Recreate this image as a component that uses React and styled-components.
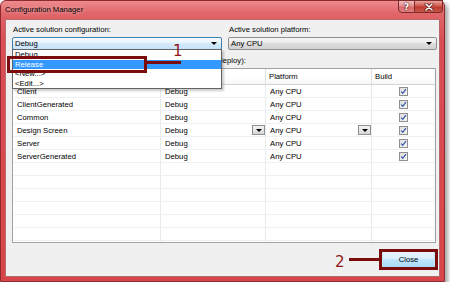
import styled, { createGlobalStyle } from "styled-components";

const GlobalStyle = createGlobalStyle`
  html, body {
    margin: 0;
    padding: 0;
    background: #ffffff;
  }
  body {
    font-family: "Liberation Sans", Arial, sans-serif;
    font-size: 7.7px;
    color: #000000;
  }
`;

const Window = styled.div`
  position: relative;
  box-sizing: border-box;
  width: 445px;
  height: 282px;
  display: flex;
  flex-direction: column;
  padding: 0 4px 4px 4px;
  border: 1px solid #8e2b2e;
  border-radius: 6px 6px 0 0;
  background: linear-gradient(180deg, #ee8b8d 0px, #e0666a 12px, #da4e53 40px, #d7454a 100%);
  box-shadow: 3px 3px 4px rgba(0, 0, 0, 0.35);
`;

const TitleBar = styled.div`
  height: 18px;
  display: flex;
  align-items: flex-start;
`;

const Title = styled.div`
  padding-top: 4px;
  line-height: 10px;
  color: #000000;
  text-shadow: 0 0 4px rgba(255, 255, 255, 0.7);
`;

const CaptionButtons = styled.div`
  display: flex;
  margin: -1px -3px 0 auto;
`;

const CaptionButton = styled.div`
  box-sizing: border-box;
  width: ${(p) => (p.$close ? "28px" : "17px")};
  height: 13px;
  display: flex;
  align-items: center;
  justify-content: center;
  border: 1px solid #7c2a2a;
  border-left: ${(p) => (p.$close ? "none" : "1px solid #7c2a2a")};
  border-radius: ${(p) => (p.$close ? "0 0 4px 0" : "0 0 0 4px")};
  background: ${(p) =>
    p.$close
      ? "linear-gradient(180deg, #e9a49c 0%, #d0574d 45%, #bd3a31 55%, #c9574b 100%)"
      : "linear-gradient(180deg, #f2bcbc 0%, #e48f90 45%, #d9696c 55%, #e07d80 100%)"};
  color: #ffffff;
  font-family: "DejaVu Sans", sans-serif;
  font-weight: bold;
  font-size: 9px;
  text-shadow: 0 0 2px #4a1010, 0 0 1px #4a1010;
`;

const Client = styled.div`
  position: relative;
  flex: 1;
  display: flex;
  flex-direction: column;
  padding: 5px 2px 7px 6px;
  background: #f0f0f0;
  border: 1px solid #b86a6c;
`;

const TopRow = styled.div`
  display: grid;
  grid-template-columns: 210px 1fr;
  column-gap: 6px;
`;

const Field = styled.div`
  display: flex;
  flex-direction: column;
  gap: 2px;
`;

const Label = styled.div`
  line-height: 10px;
  padding-left: 1px;
  margin-top: ${(p) => p.$gap || 0}px;
  white-space: nowrap;
`;

const Combo = styled.div`
  box-sizing: border-box;
  height: 13px;
  display: flex;
  align-items: center;
  justify-content: space-between;
  padding: 0 4px 0 2px;
  border: 1px solid ${(p) => (p.$focused ? "#3c7fb1" : "#8e8f8f")};
  border-radius: 2px;
  background: ${(p) =>
    p.$focused
      ? "linear-gradient(180deg, #f4fafe 0%, #e6f3fc 50%, #d3eafa 50%, #c7e3f8 100%)"
      : "linear-gradient(180deg, #f4f4f4 0%, #ebebeb 50%, #dddddd 50%, #d2d2d2 100%)"};
`;

const Arrow = styled.span`
  width: 0;
  height: 0;
  border-left: 3px solid transparent;
  border-right: 3px solid transparent;
  border-top: 3px solid #000000;
`;

const Grid = styled.div`
  margin: 2px 1px 0 0;
  height: 175px;
  box-sizing: border-box;
  border: 1px solid #9ea3a8;
  background: #ffffff;
  overflow: hidden;
`;

const HeaderRow = styled.div`
  display: grid;
  grid-template-columns: 148px 105px 106px 1fr;
  height: 16px;
  box-sizing: border-box;
  border-bottom: 1px solid #d5d5d5;
  background: linear-gradient(180deg, #ffffff 0%, #ffffff 50%, #f6f7f9 100%);
`;

const HeaderCell = styled.div`
  padding-left: 3px;
  line-height: 15px;
  border-right: 1px solid #dde1e6;
  white-space: nowrap;
  &:last-child {
    border-right: none;
  }
`;

const Row = styled.div`
  display: grid;
  grid-template-columns: 148px 105px 106px 1fr;
  height: 13px;
  box-sizing: border-box;
  border-bottom: 1px solid #eef0f2;
`;

const Cell = styled.div`
  display: flex;
  align-items: center;
  justify-content: ${(p) => (p.$center ? "center" : "space-between")};
  padding-left: ${(p) => (p.$center ? 0 : 4)}px;
  border-right: 1px solid #e6ebee;
  white-space: nowrap;
  &:last-child {
    border-right: none;
  }
`;

const CellDrop = styled.div`
  box-sizing: border-box;
  width: 13px;
  height: 10px;
  display: flex;
  align-items: center;
  justify-content: center;
  border: 1px solid #8e8f8f;
  background: linear-gradient(180deg, #f4f4f4 0%, #e6e6e6 50%, #d6d6d6 100%);
`;

const ButtonRow = styled.div`
  display: flex;
  justify-content: flex-end;
  margin-top: 7px;
  padding-right: 1px;
`;

const Button = styled.div`
  box-sizing: border-box;
  width: 55px;
  height: 19px;
  display: flex;
  align-items: center;
  justify-content: center;
  border: 1px solid #3c7fb1;
  border-radius: 3px;
  box-shadow: inset 0 0 0 1px #c6e8fb;
  background: linear-gradient(180deg, #eaf6fd 0%, #d9f0fc 50%, #bee6fd 50%, #a7d9f5 100%);
`;

const DropList = styled.div`
  position: absolute;
  left: 6px;
  top: 29px;
  width: 210px;
  height: 40px;
  box-sizing: border-box;
  border: 1px solid #646464;
  background: #ffffff;
  box-shadow: 2px 2px 2px rgba(0, 0, 0, 0.2);
`;

const DropItem = styled.div`
  height: 9.5px;
  line-height: 9.5px;
  padding-left: 2px;
  background: ${(p) => (p.$selected ? "#3399ff" : "transparent")};
  color: ${(p) => (p.$selected ? "#ffffff" : "#000000")};
`;

const MarkBox = styled.div`
  position: absolute;
  box-sizing: border-box;
  left: ${(p) => p.$x}px;
  top: ${(p) => p.$y}px;
  width: ${(p) => p.$w}px;
  height: ${(p) => p.$h}px;
  border: 3px solid #7a0c0e;
`;

const MarkLine = styled.div`
  position: absolute;
  left: ${(p) => p.$x}px;
  top: ${(p) => p.$y}px;
  width: ${(p) => p.$w}px;
  height: 2.5px;
  background: #7a0c0e;
`;

const MarkNumber = styled.div`
  position: absolute;
  left: ${(p) => p.$x}px;
  top: ${(p) => p.$y}px;
  font-family: "DejaVu Sans", sans-serif;
  font-size: 15px;
  line-height: 15px;
  color: #921818;
`;

const CheckBox = () => (
  <svg width="9" height="9" viewBox="0 0 9 9">
    <defs>
      <linearGradient id="cbg" x1="0" y1="0" x2="1" y2="1">
        <stop offset="0" stopColor="#dcdcdc" />
        <stop offset="1" stopColor="#f8f8f8" />
      </linearGradient>
    </defs>
    <rect x="0.5" y="0.5" width="8" height="8" fill="url(#cbg)" stroke="#8f8f8f" />
    <path d="M2.2 4.6 L3.8 6.3 L6.9 2.2" fill="none" stroke="#3b5aa8" strokeWidth="1.3" />
  </svg>
);

const CloseGlyph = () => (
  <svg width="10" height="8" viewBox="0 0 10 8">
    <path d="M2 1 L8 7 M8 1 L2 7" stroke="#5a1414" strokeWidth="3" strokeLinecap="round" />
    <path d="M2 1 L8 7 M8 1 L2 7" stroke="#ffffff" strokeWidth="1.6" strokeLinecap="round" />
  </svg>
);

const projects = [
  { name: "Client" },
  { name: "ClientGenerated" },
  { name: "Common" },
  { name: "Design Screen", drop: true },
  { name: "Server" },
  { name: "ServerGenerated" },
];

const App = () => {
  const emptyRows = Array.from({ length: 7 });
  return (
    <>
      <GlobalStyle />
      <Window>
        <TitleBar>
          <Title>Configuration Manager</Title>
          <CaptionButtons>
            <CaptionButton>?</CaptionButton>
            <CaptionButton $close>
              <CloseGlyph />
            </CaptionButton>
          </CaptionButtons>
        </TitleBar>
        <Client>
          <TopRow>
            <Field>
              <Label>Active solution configuration:</Label>
              <Combo $focused>
                <span>Debug</span>
                <Arrow />
              </Combo>
            </Field>
            <Field>
              <Label>Active solution platform:</Label>
              <Combo>
                <span>Any CPU</span>
                <Arrow />
              </Combo>
            </Field>
          </TopRow>
          <Label $gap={6}>
            Project contexts (check the project configurations to build or deploy):
          </Label>
          <Grid>
            <HeaderRow>
              <HeaderCell>Project</HeaderCell>
              <HeaderCell>Configuration</HeaderCell>
              <HeaderCell>Platform</HeaderCell>
              <HeaderCell>Build</HeaderCell>
            </HeaderRow>
            {projects.map((p) => (
              <Row key={p.name}>
                <Cell>{p.name}</Cell>
                <Cell>
                  <span>Debug</span>
                  {p.drop && (
                    <CellDrop>
                      <Arrow />
                    </CellDrop>
                  )}
                </Cell>
                <Cell>
                  <span>Any CPU</span>
                  {p.drop && (
                    <CellDrop>
                      <Arrow />
                    </CellDrop>
                  )}
                </Cell>
                <Cell $center>
                  <CheckBox />
                </Cell>
              </Row>
            ))}
            {emptyRows.map((_, i) => (
              <Row key={i}>
                <Cell />
                <Cell />
                <Cell />
                <Cell />
              </Row>
            ))}
          </Grid>
          <ButtonRow>
            <Button>Close</Button>
          </ButtonRow>

          <DropList>
            <DropItem>Debug</DropItem>
            <DropItem $selected>Release</DropItem>
            <DropItem>&lt;New...&gt;</DropItem>
            <DropItem>&lt;Edit...&gt;</DropItem>
          </DropList>

          <MarkBox $x={1} $y={36} $w={140} $h={17} />
          <MarkLine $x={141} $y={41} $w={34} />
          <MarkNumber $x={167} $y={24}>1</MarkNumber>

          <MarkBox $x={373} $y={229} $w={59} $h={21} />
          <MarkLine $x={343} $y={238} $w={31} />
          <MarkNumber $x={329} $y={235}>2</MarkNumber>
        </Client>
      </Window>
    </>
  );
};

export default App;
